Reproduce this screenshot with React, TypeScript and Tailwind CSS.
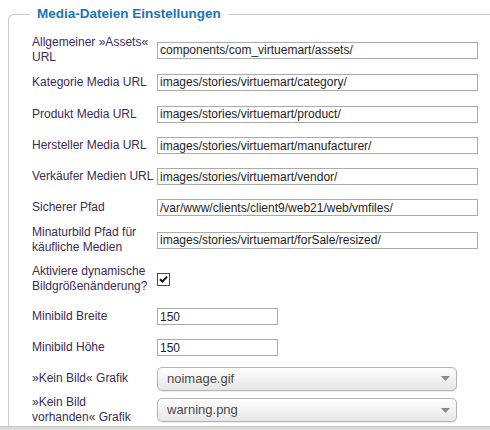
import React from "react";

type Row = {
  label: React.ReactNode;
  h: string;
  control: React.ReactNode;
};

const TextField = ({ value, w = "w-[321px]" }: { value: string; w?: string }) => (
  <input
    readOnly
    value={value}
    className={`${w} h-[17px] border border-[#ababab] bg-white px-[2px] text-[12px] leading-[15px] text-[#1e1e1e] outline-none font-['Liberation_Sans',Arial,sans-serif]`}
  />
);

const Dropdown = ({ value }: { value: string }) => (
  <div className="flex h-[24px] w-[300px] items-center justify-between rounded-[5px] border border-[#b4b4b4] bg-gradient-to-b from-white to-[#e6e6e6] pl-[9px] pr-[6px] text-[13px] text-[#4a4a4a] shadow-[0_1px_1px_rgba(0,0,0,0.08)]">
    <span>{value}</span>
    <svg width="9" height="5" viewBox="0 0 9 5">
      <path d="M0 0H9L4.5 5Z" fill="#8a8a8a" />
    </svg>
  </div>
);

const CheckBox = () => (
  <span className="flex h-[13px] w-[13px] items-center justify-center border border-[#4b4b4b] bg-white">
    <svg width="9" height="9" viewBox="0 0 9 9">
      <path d="M1 4.2L3.4 6.6L8 1.6" fill="none" stroke="#111" strokeWidth="2" />
    </svg>
  </span>
);

const rows: Row[] = [
  {
    label: (
      <>
        Allgemeiner »Assets«
        <br />
        URL
      </>
    ),
    h: "h-[32px]",
    control: <TextField value="components/com_virtuemart/assets/" />,
  },
  { label: "Kategorie Media URL", h: "h-[32px]", control: <TextField value="images/stories/virtuemart/category/" /> },
  { label: "Produkt Media URL", h: "h-[32px]", control: <TextField value="images/stories/virtuemart/product/" /> },
  { label: "Hersteller Media URL", h: "h-[31px]", control: <TextField value="images/stories/virtuemart/manufacturer/" /> },
  { label: "Verkäufer Medien URL", h: "h-[31px]", control: <TextField value="images/stories/virtuemart/vendor/" /> },
  { label: "Sicherer Pfad", h: "h-[31px]", control: <TextField value="/var/www/clients/client9/web21/web/vmfiles/" /> },
  {
    label: (
      <>
        Minaturbild Pfad für
        <br />
        käufliche Medien
      </>
    ),
    h: "h-[34px]",
    control: <TextField value="images/stories/virtuemart/forSale/resized/" />,
  },
  {
    label: (
      <>
        Aktiviere dynamische
        <br />
        Bildgrößenänderung?
      </>
    ),
    h: "h-[44px]",
    control: <CheckBox />,
  },
  { label: "Minibild Breite", h: "h-[31px]", control: <TextField value="150" w="w-[121px]" /> },
  { label: "Minibild Höhe", h: "h-[31px]", control: <TextField value="150" w="w-[121px]" /> },
  { label: "»Kein Bild« Grafik", h: "h-[31px]", control: <Dropdown value="noimage.gif" /> },
  {
    label: (
      <>
        »Kein Bild
        <br />
        vorhanden« Grafik
      </>
    ),
    h: "h-[32px]",
    control: <Dropdown value="warning.png" />,
  },
];

export default function App() {
  return (
    <div className="flex h-[430px] w-[490px] flex-col overflow-hidden bg-white font-['Liberation_Sans',Arial,sans-serif]">
      <div className="flex-1 pl-[8px] pt-[4px]">
        <fieldset className="h-full rounded-tl-[6px] border-l border-t border-[#cacaca] pl-[23px] pt-[10px]">
          <legend className="-ml-[2px] px-[7px] text-[13.5px] font-bold leading-[20px] text-[#2274b4]">
            Media-Dateien Einstellungen
          </legend>
          <div className="flex flex-col">
            {rows.map((r, i) => (
              <div key={i} className={`flex items-center ${r.h}`}>
                <div className="w-[125px] shrink-0 whitespace-nowrap text-[12px] leading-[15px] text-[#3d2b58]">
                  {r.label}
                </div>
                {r.control}
              </div>
            ))}
          </div>
        </fieldset>
      </div>
      <div className="h-[5px] shrink-0 border-t border-[#c4c4c4] bg-[#dcdcd6]" />
    </div>
  );
}
